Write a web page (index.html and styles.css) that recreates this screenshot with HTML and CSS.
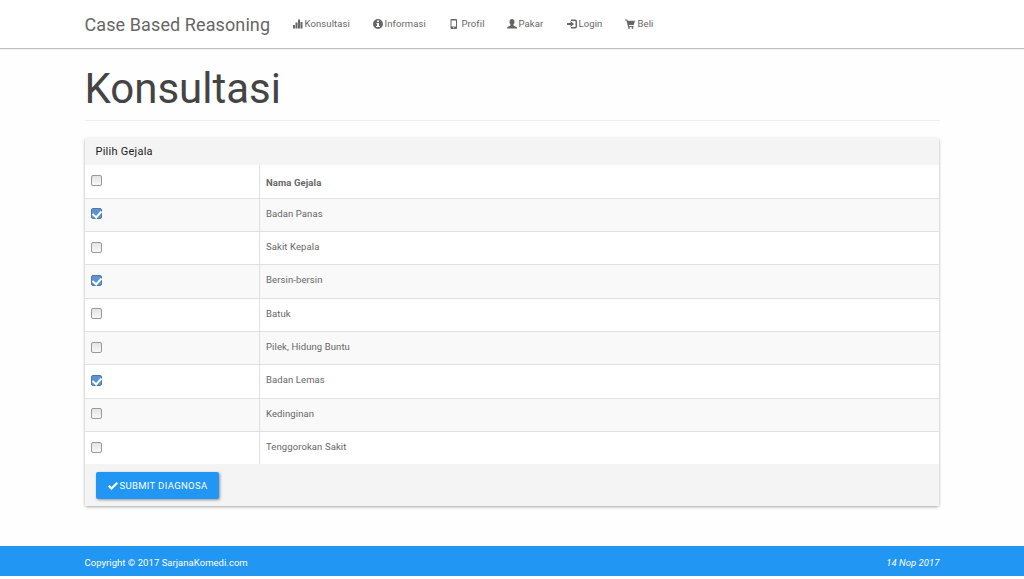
FILE: index.html
```html
<!DOCTYPE html>
<html lang="id">
<head>
  <meta charset="UTF-8" />
  <meta name="viewport" content="width=device-width, initial-scale=1" />
  <title>Case Based Reasoning - Konsultasi</title>
  <link rel="stylesheet" href="styles.css">
</head>
<body>
  <nav class="navbar">
    <div class="container navbar-inner">
      <a class="navbar-brand" href="#">Case Based Reasoning</a>
      <ul class="nav">
        <li class="nav-konsultasi"><a href="#"><svg class="icon" viewBox="0 0 20 20"><path d="M0 12h4v7H0zM5 7h4v12H5zM10 1h4v18h-4zM15 6h4v13h-4z"/></svg><span>Konsultasi</span></a></li>
        <li class="nav-informasi"><a href="#"><svg class="icon" viewBox="0 0 20 20"><path fill-rule="evenodd" d="M10 0a10 10 0 1 0 0 20 10 10 0 0 0 0-20zM8 3h4v3H8zM7 8h5v6h2v2H6v-2h2v-4H7z"/></svg><span>Informasi</span></a></li>
        <li class="nav-profil"><a href="#"><svg class="icon" viewBox="0 0 20 20"><path fill-rule="evenodd" d="M5 0h9a2 2 0 0 1 2 2v16a2 2 0 0 1-2 2H5a2 2 0 0 1-2-2V2a2 2 0 0 1 2-2zM5 3v12h9V3zM8.500 16.500v2h2v-2z"/></svg><span>Profil</span></a></li>
        <li class="nav-pakar"><a href="#"><svg class="icon" viewBox="0 0 20 20"><path d="M10 0c3 0 5 2 5 5 0 3-1 5-2 6v2l6 3c1 .5 1 1 1 3H0c0-2 0-2.500 1-3l6-3v-2C6 10 5 8 5 5c0-3 2-5 5-5z"/></svg><span>Pakar</span></a></li>
        <li class="nav-login"><a href="#"><svg class="icon" viewBox="0 0 20 20"><path d="M8 1h8a4 4 0 0 1 4 4v10a4 4 0 0 1-4 4H8v-3h8a1 1 0 0 0 1-1V5a1 1 0 0 0-1-1H8zM7 4l7 6-7 6v-4H0V8h7z"/></svg><span>Login</span></a></li>
        <li class="nav-beli"><a href="#"><svg class="icon" viewBox="0 0 20 20"><path d="M0 1h4.500l1 2.500H20L17.500 12H7.500l.5 2h9v2H6L3 3H0z"/><circle cx="8" cy="18" r="1.800"/><circle cx="15" cy="18" r="1.800"/></svg><span>Beli</span></a></li>
      </ul>
    </div>
  </nav>

  <main class="container">
    <h1 class="page-header">Konsultasi</h1>

    <form class="panel">
      <div class="panel-heading">Pilih Gejala</div>
      <table class="table">
        <thead>
          <tr><th><input type="checkbox"></th><th>Nama Gejala</th></tr>
        </thead>
        <tbody>
          <tr><td><input type="checkbox" checked></td><td>Badan Panas</td></tr>
          <tr><td><input type="checkbox"></td><td>Sakit Kepala</td></tr>
          <tr><td><input type="checkbox" checked></td><td>Bersin-bersin</td></tr>
          <tr><td><input type="checkbox"></td><td>Batuk</td></tr>
          <tr><td><input type="checkbox"></td><td>Pilek, Hidung Buntu</td></tr>
          <tr><td><input type="checkbox" checked></td><td>Badan Lemas</td></tr>
          <tr><td><input type="checkbox"></td><td>Kedinginan</td></tr>
          <tr><td><input type="checkbox"></td><td>Tenggorokan Sakit</td></tr>
        </tbody>
      </table>
      <div class="panel-footer">
        <button class="btn" type="button"><svg class="icon" viewBox="0 0 20 20"><path d="M0 11l3-3 4 4L17 2l3 3L7 18z"/></svg><span>SUBMIT DIAGNOSA</span></button>
      </div>
    </form>
  </main>

  <footer class="footer">
    <div class="container footer-inner">
      <span>Copyright © 2017 SarjanaKomedi.com</span>
      <em>14 Nop 2017</em>
    </div>
  </footer>
</body>
</html>
```
FILE: styles.css
```css
* {
  box-sizing: border-box;
}

body {
  margin: 0;
  height: 579px;
  overflow: hidden;
  font-family: Roboto, sans-serif;
  font-size: 9.5px;
  line-height: 14px;
  letter-spacing: 0.1px;
  color: #666;
  background-color: #fefefe;
}

.container {
  width: 855px;
  margin: 0 auto;
}

.navbar {
  height: 48px;
  background-color: #fff;
  box-shadow: 0 1px 1px rgba(0, 0, 0, 0.25);
}

.navbar-inner {
  display: flex;
  align-items: center;
  height: 48px;
  padding-top: 1px;
}

.navbar-brand {
  width: 208px;
  font-size: 18px;
  line-height: 24px;
  white-space: nowrap;
  color: #666;
  text-decoration: none;
}

.nav {
  display: flex;
  margin: 0 0 1px;
  padding: 0;
  list-style: none;
}

.nav a {
  display: flex;
  align-items: center;
  gap: 2px;
  color: #666;
  text-decoration: none;
}

.nav-konsultasi { width: 80px; }
.nav-informasi { width: 76px; }
.nav-profil { width: 58px; }
.nav-pakar { width: 60px; }
.nav-login { width: 58px; }

.nav-profil a,
.nav-beli a {
  gap: 3px;
}

.icon {
  flex-shrink: 0;
  width: 10px;
  height: 10px;
  fill: currentColor;
}

.page-header {
  height: 73px;
  margin: 0 0 17px;
  padding-top: 17px;
  font-size: 42px;
  font-weight: 400;
  line-height: 48px;
  letter-spacing: 0;
  color: #444;
  border-bottom: 1px solid #eee;
}

.panel {
  width: 854.5px;
  height: 368px;
  border-radius: 2px;
  background-color: #fff;
  box-shadow: 0 1px 3px rgba(0, 0, 0, 0.35);
}

.panel-heading {
  height: 27px;
  padding: 6px 11px;
  font-size: 11px;
  line-height: 15px;
  letter-spacing: 0.25px;
  color: #212121;
  background-color: #f4f4f4;
}

.table {
  width: 100%;
  border-collapse: separate;
  border-spacing: 0;
  table-layout: fixed;
}

.table tr {
  height: 33.35px;
}

.table thead tr {
  height: 33.6px;
}

.table tbody tr:last-child {
  height: 32px;
}

.table th,
.table td {
  padding: 0 6.5px 2px;
  text-align: left;
  border-bottom: 1px solid #e0e0e0;
}

.table th:first-child,
.table td:first-child {
  width: 175px;
  padding: 0 6px 2px;
  border-right: 1px solid #e0e0e0;
}

.table th {
  padding-top: 5px;
}

.table tbody tr:nth-child(odd) {
  background-color: #f9f9f9;
}

.table tbody tr:last-child td {
  border-bottom: 0;
}

input[type="checkbox"] {
  display: block;
  appearance: none;
  width: 11px;
  height: 11px;
  margin: 0;
  border: 1px solid #999;
  border-radius: 2px;
  background: linear-gradient(#e4e4e4, #f8f8f8);
}

input[type="checkbox"]:checked {
  border-color: #4c79ab;
  background: #5b94cf;
}

input[type="checkbox"]:checked::before {
  content: "";
  display: block;
  width: 4px;
  height: 7px;
  margin: 0 0 0 2.5px;
  border: solid #fff;
  border-width: 0 2px 2px 0;
  transform: rotate(42deg);
}

.panel-footer {
  height: 42px;
  padding: 8px 11px 0;
  background-color: #f4f4f4;
}

.btn {
  display: flex;
  align-items: center;
  gap: 2px;
  width: 123px;
  height: 27px;
  padding: 0 12px;
  border: 0;
  border-radius: 2px;
  font-family: inherit;
  font-size: 9.5px;
  letter-spacing: 0.33px;
  white-space: nowrap;
  color: #fff;
  background-color: #2196f3;
  box-shadow: 1px 1px 3px rgba(0, 0, 0, 0.4);
}

.footer {
  height: 30px;
  margin-top: 40px;
  letter-spacing: 0.04px;
  color: #fff;
  background-color: #2196f3;
}

.footer-inner {
  display: flex;
  justify-content: space-between;
  padding-top: 10px;
}
```
